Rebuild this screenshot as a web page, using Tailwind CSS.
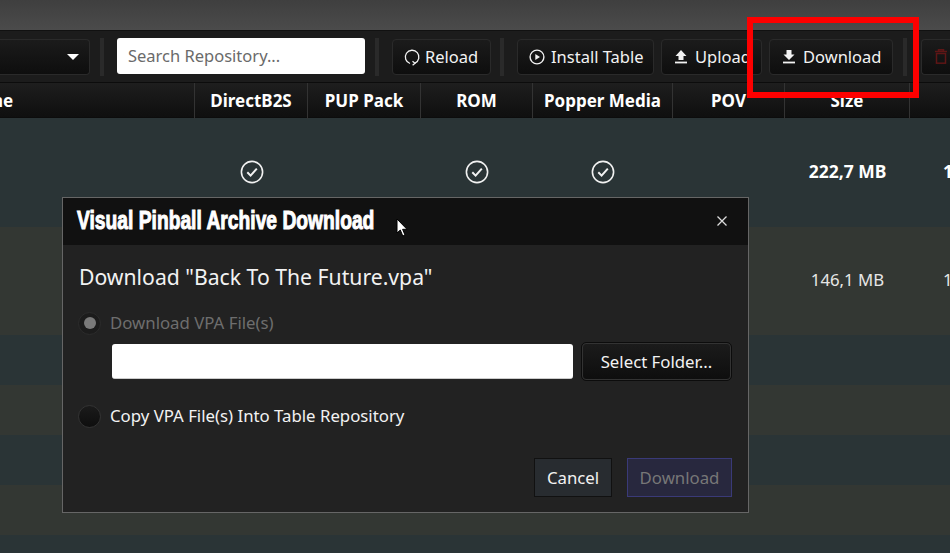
<!DOCTYPE html>
<html lang="en">
<head>
  <meta charset="UTF-8" />
  <title>Table Repository</title>
  <script src="https://cdn.jsdelivr.net/npm/@tailwindcss/browser@4"></script>
</head>
<body class="bg-[#2a3436] overflow-hidden font-['Noto_Sans','Open_Sans',sans-serif] text-white">
  <div class="relative w-[950px] h-[553px] overflow-hidden">

    <!-- Window top -->
    <div class="h-[31px] bg-gradient-to-b from-[#3f3f3f] to-[#4b4b4b] border-b border-[#111]"></div>

    <!-- Toolbar -->
    <div class="h-[52px] bg-[#1c1c1c] flex items-center text-[16.5px] text-[#f2f2f2] border-b border-[#0c0c0c]">
      <div class="w-[90px] h-[36px] shrink-0 rounded-r bg-gradient-to-b from-[#1b1b1b] to-[#0e0e0e] border border-[#2a2a2a] border-l-0 flex items-center justify-end pr-[10px]">
        <div class="w-0 h-0 border-x-[6px] border-x-transparent border-t-[6px] border-t-white"></div>
      </div>
      <div class="w-[4px] h-[38px] bg-[#2a2a2a] ml-[10px] mr-[13px] shrink-0"></div>
      <div class="w-[248px] h-[36px] mb-[2px] pt-[2px] bg-white rounded-[3px] shrink-0 text-[#6a6a6a] flex items-center px-[11px]">Search Repository...</div>
      <div class="w-[4px] h-[38px] bg-[#2a2a2a] ml-[10px] mr-[13px] shrink-0"></div>
      <div class="w-[99px] h-[36px] shrink-0 rounded bg-gradient-to-b from-[#1b1b1b] to-[#0e0e0e] border border-[#2a2a2a] flex items-center gap-[4px] pl-[10px]">
        <svg width="18" height="18" viewBox="0 0 18 18" fill="none" stroke="#f2f2f2" stroke-width="1.3"><path d="M7 15.5 A6.8 6.8 0 1 1 12 15.2"/><path d="M9.5 13.2 L12 15.2 L9.6 17.3"/></svg>
        <span class="pt-[2px]">Reload</span>
      </div>
      <div class="w-[4px] h-[38px] bg-[#2a2a2a] ml-[9px] mr-[13px] shrink-0"></div>
      <div class="w-[137px] h-[36px] shrink-0 rounded bg-gradient-to-b from-[#1b1b1b] to-[#0e0e0e] border border-[#2a2a2a] flex items-center gap-[6px] pl-[11px]">
        <svg width="16" height="16" viewBox="0 0 16 16" fill="none" stroke="#f2f2f2" stroke-width="1.4"><circle cx="8" cy="8" r="6.9"/><path d="M6.3 4.9 L11 8 L6.3 11.1 Z" fill="#f2f2f2" stroke="none"/></svg>
        <span class="pt-[2px]">Install Table</span>
      </div>
      <div class="w-[101px] h-[36px] ml-[7px] shrink-0 rounded bg-gradient-to-b from-[#1b1b1b] to-[#0e0e0e] border border-[#2a2a2a] flex items-center gap-[8px] pl-[13px]">
        <svg width="12" height="14" viewBox="0 0 12 14" fill="#f2f2f2"><path d="M6 0 L11.5 6 H8.5 V10 H3.5 V6 H0.5 Z"/><rect x="0" y="11.6" width="12" height="1.8"/></svg>
        <span class="pt-[2px]">Upload</span>
      </div>
      <div class="w-[124px] h-[36px] ml-[7px] shrink-0 rounded bg-gradient-to-b from-[#1b1b1b] to-[#0e0e0e] border border-[#2a2a2a] flex items-center gap-[8px] pl-[13px]">
        <svg width="12" height="14" viewBox="0 0 12 14" fill="#f2f2f2"><path d="M3.5 0 H8.5 V4.5 H11.5 L6 10 L0.5 4.5 H3.5 Z"/><rect x="0" y="11.6" width="12" height="1.8"/></svg>
        <span class="pt-[2px]">Download</span>
      </div>
      <div class="w-[4px] h-[38px] bg-[#2a2a2a] ml-[10px] mr-[14px] shrink-0"></div>
      <div class="w-[60px] h-[36px] shrink-0 rounded-l bg-gradient-to-b from-[#1b1b1b] to-[#0e0e0e] border border-[#2a2a2a] border-r-0 flex items-center pl-[13px]">
        <svg width="12" height="15" viewBox="0 0 12 15" fill="none" stroke="#5e1616" stroke-width="1.5"><path d="M0 2.5 H12 M3.5 2.5 V0.8 H8.5 V2.5"/><rect x="1.5" y="4.5" width="9" height="9.7"/></svg>
      </div>
    </div>

    <!-- Table header -->
    <div class="h-[35px] bg-gradient-to-b from-[#1e1e1e] to-[#0f0f0f] border-b border-[#0c0c0c] grid grid-cols-[195px_113px_113px_112px_140px_112px_125px_1fr] text-[17px] font-bold text-center leading-[36px]">
      <div class="border-r border-[#333] text-left whitespace-nowrap overflow-hidden"><span class="block -ml-[8px]">ne</span></div>
      <div class="border-r border-[#333]">DirectB2S</div>
      <div class="border-r border-[#333]">PUP Pack</div>
      <div class="border-r border-[#333]">ROM</div>
      <div class="border-r border-[#333]">Popper Media</div>
      <div class="border-r border-[#333]">POV</div>
      <div class="border-r border-[#333]">Size</div>
      <div></div>
    </div>

    <!-- Rows -->
    <div class="grid grid-cols-[195px_113px_113px_112px_140px_112px_125px_1fr] h-[109px] bg-[#2a3436] items-center text-[17.5px] text-center pb-[2px]">
      <div></div>
      <div class="flex justify-center">
        <svg width="24" height="24" viewBox="0 0 24 24" fill="none" stroke="#f2f2f2" stroke-width="1.6"><circle cx="12" cy="12" r="10.6"/><path d="M7.3 12.3 L10.6 15.6 L16.8 8.6" stroke-width="2"/></svg>
      </div>
      <div></div>
      <div class="flex justify-center">
        <svg width="24" height="24" viewBox="0 0 24 24" fill="none" stroke="#f2f2f2" stroke-width="1.6"><circle cx="12" cy="12" r="10.6"/><path d="M7.3 12.3 L10.6 15.6 L16.8 8.6" stroke-width="2"/></svg>
      </div>
      <div class="flex justify-center">
        <svg width="24" height="24" viewBox="0 0 24 24" fill="none" stroke="#f2f2f2" stroke-width="1.6"><circle cx="12" cy="12" r="10.6"/><path d="M7.3 12.3 L10.6 15.6 L16.8 8.6" stroke-width="2"/></svg>
      </div>
      <div></div>
      <div class="font-bold">222,7 MB</div>
      <div class="font-bold text-left pl-[33px]">1</div>
    </div>
    <div class="grid grid-cols-[195px_113px_113px_112px_140px_112px_125px_1fr] h-[108px] bg-[#333733] items-center text-[16.8px] text-center text-[#e6e6e6] pb-[2px]">
      <div></div><div></div><div></div><div></div><div></div><div></div>
      <div>146,1 MB</div>
      <div class="text-left pl-[33px]">1</div>
    </div>
    <div class="h-[50px] bg-[#2a3436]"></div>
    <div class="h-[50px] bg-[#333733]"></div>
    <div class="h-[50px] bg-[#2a3436]"></div>
    <div class="h-[50px] bg-[#333733]"></div>
    <div class="h-[18px] bg-[#2a3436]"></div>

    <!-- Dialog -->
    <div class="absolute left-[62px] top-[197px] w-[687px] h-[316px] bg-[#222] border border-[#666] flex flex-col">
      <div class="h-[47px] bg-[#111] flex items-center justify-between pl-[14px] pr-[21px] shrink-0">
        <span class="block mb-[1px] origin-left scale-x-[0.77] whitespace-nowrap w-[300px] font-['Liberation_Sans',sans-serif] font-bold text-[25px] [-webkit-text-stroke:1px_white]">Visual Pinball Archive Download</span>
        <svg class="mb-[1px]" width="10" height="10" viewBox="0 0 10 10" stroke="#ddd" stroke-width="1.3"><path d="M0.5 0.5 L9.5 9.5 M9.5 0.5 L0.5 9.5"/></svg>
      </div>
      <div class="flex-1 flex flex-col px-[16px]">
        <div class="text-[21.2px] text-[#f2f2f2] mt-[17px] leading-[30px]">Download "Back To The Future.vpa"</div>
        <div class="flex items-center gap-[9px] mt-[19px] h-[24px] text-[16.8px] text-[#6e6e6e]">
          <div class="w-[23px] h-[23px] -ml-[1px] rounded-full bg-[#1c1c1c] border border-[#2c2c2c] flex items-center justify-center">
            <div class="w-[12px] h-[12px] rounded-full bg-[#7a7a7a]"></div>
          </div>
          Download VPA File(s)
        </div>
        <div class="flex items-center mt-[8px] pl-[33px]">
          <div class="w-[461px] h-[35px] bg-white rounded-[3px] border-b border-[#ccc]"></div>
          <div class="w-[149px] h-[37px] ml-[9px] rounded bg-gradient-to-b from-[#1b1b1b] to-[#0e0e0e] border border-[#333] outline outline-[#0c0c0c] text-[16.8px] text-[#f2f2f2] flex items-center justify-center">Select Folder...</div>
        </div>
        <div class="flex items-center gap-[9px] mt-[24px] h-[24px] text-[16.8px] text-[#f2f2f2]">
          <div class="w-[23px] h-[23px] -ml-[1px] rounded-full bg-gradient-to-b from-[#1b1b1b] to-[#0e0e0e] border border-[#333]"></div>
          Copy VPA File(s) Into Table Repository
        </div>
        <div class="flex justify-end gap-[15px] mt-[30px]">
          <div class="w-[78px] h-[39px] bg-[#282c30] border border-[#111] text-[16.8px] text-[#f2f2f2] flex items-center justify-center">Cancel</div>
          <div class="w-[105px] h-[39px] bg-[#28283e] border border-[#3a3a78] text-[16.8px] text-[#777] flex items-center justify-center">Download</div>
        </div>
      </div>
    </div>

    <!-- Mouse cursor -->
    <svg class="absolute left-[396px] top-[218px]" width="13" height="20" viewBox="0 0 13 20"><path d="M1 1 V15 L4.3 12 L6.8 18 L9 17 L6.6 11.3 H11 Z" fill="#fff" stroke="#000" stroke-width="1"/></svg>

    <!-- Red annotation box -->
    <div class="absolute left-[747px] top-[17px] w-[172px] h-[81px] border-[6px] border-[#fe0000]"></div>
  </div>
</body>
</html>
